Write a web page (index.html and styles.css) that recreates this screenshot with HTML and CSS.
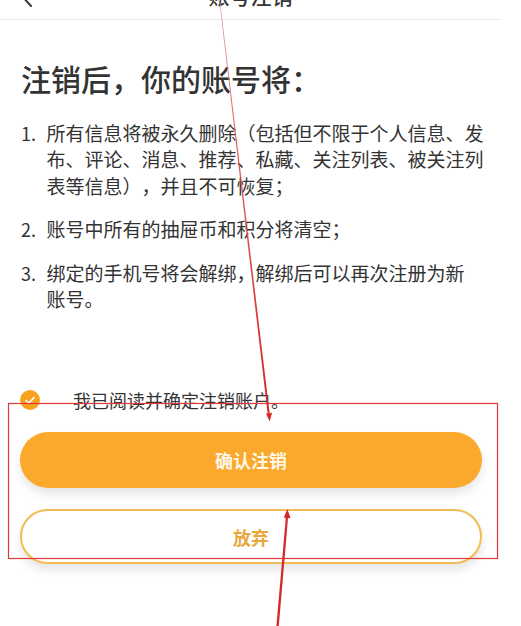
FILE: index.html
```html
<!DOCTYPE html>
<html lang="zh-CN">
<head>
<meta charset="utf-8">
<title>账号注销</title>
<link rel="stylesheet" href="styles.css">
</head>
<body>
<div class="page">
  <header class="topbar">
    <span class="back">
      <svg width="20" height="24" viewBox="0 0 20 24"><polyline points="15,1 5,12 15,23" fill="none" stroke="#3a3a3a" stroke-width="2" stroke-linecap="round" stroke-linejoin="round"/></svg>
    </span>
    <h1 class="topbar-title">账号注销</h1>
  </header>

  <section class="content">
    <h2 class="title">注销后，你的账号将：</h2>
    <ol class="terms">
      <li><span class="num">1.</span><span class="txt">所有信息将被永久删除（包括但不限于个人信息、发布、评论、消息、推荐、私藏、关注列表、被关注列表等信息），并且不可恢复；</span></li>
      <li><span class="num">2.</span><span class="txt">账号中所有的抽屉币和积分将清空；</span></li>
      <li><span class="num">3.</span><span class="txt">绑定的手机号将会解绑，解绑后可以再次注册为新<span class="nowrap">账号。</span></span></li>
    </ol>
  </section>

  <section class="actions">
    <label class="agree">
      <span class="check">
        <svg width="20" height="20" viewBox="0 0 20 20"><circle cx="10" cy="10" r="10" fill="#F7A21C"/><polyline points="6,10.5 8.8,13 14,7.6" fill="none" stroke="#fff" stroke-width="1.6" stroke-linecap="round" stroke-linejoin="round"/></svg>
      </span>
      <span class="agree-text">我已阅读并确定注销账户。</span>
    </label>
    <button class="btn btn-primary" type="button">确认注销</button>
    <button class="btn btn-outline" type="button">放弃</button>
  </section>
</div>

<svg class="annotations" width="521" height="626" viewBox="0 0 521 626">
  <defs>
    <linearGradient id="fade" x1="0" y1="0" x2="0" y2="1">
      <stop offset="0" stop-color="#e8a0a0"/>
      <stop offset="0.35" stop-color="#de5a5a"/>
      <stop offset="1" stop-color="#d42828"/>
    </linearGradient>
  </defs>
  <rect x="8.5" y="403.5" width="489" height="155" fill="none" stroke="#e0383b" stroke-width="1.2"/>
  <polygon points="219.2,0 219.9,0 269.6,413 267.6,413.3" fill="url(#fade)"/>
  <polygon points="269.6,421.5 272,412.8 266,413.5" fill="#d42828"/>
  <polygon points="276.4,626 278.8,626 288.1,517 285.9,516.8" fill="#d42828"/>
  <polygon points="287.3,509 290.6,518.3 283.8,517.7" fill="#d42828"/>
</svg>
</body>
</html>
```

FILE: styles.css
```css
* {
  box-sizing: border-box;
}

html, body {
  margin: 0;
  padding: 0;
  background: #ffffff;
}

body {
  width: 521px;
  height: 626px;
  overflow: hidden;
  position: relative;
  font-family: "Noto Sans CJK SC", "Noto Sans", sans-serif;
  color: #333333;
  text-spacing-trim: space-all;
}

.page {
  width: 501px;
  display: flow-root;
}

.topbar {
  margin-top: -30px;
  height: 50px;
  border-bottom: 1px solid #e6e6e6;
  display: grid;
  grid-template-columns: 60px 1fr 60px;
  align-items: center;
}

.back {
  padding-left: 16px;
  display: flex;
}

.topbar-title {
  grid-column: 2;
  margin: 0;
  text-align: center;
  font-size: 21px;
  font-weight: 500;
  color: #333333;
}

.content {
  padding: 0 10px 0 21px;
}

.title {
  margin: 37.5px 0 0;
  font-size: 30px;
  line-height: 40px;
  font-weight: 500;
  color: #333333;
}

.terms {
  list-style: none;
  margin: 22px 0 0;
  padding: 0;
}

.terms li {
  display: grid;
  grid-template-columns: 25.5px 1fr;
  font-size: 19px;
  line-height: 26.5px;
  color: #333333;
}

.terms li + li {
  margin-top: 17px;
}

.num {
  font-size: 18px;
}

.nowrap {
  white-space: nowrap;
}

.actions {
  padding: 0 19px 0 20px;
  display: flex;
  flex-direction: column;
}

.agree {
  margin-top: 75.5px;
  height: 24px;
  display: flex;
  align-items: center;
  gap: 33px;
}

.check {
  display: flex;
}

.agree-text {
  font-size: 18px;
  color: #333333;
}

.btn {
  width: 100%;
  border-radius: 28px;
  font-family: inherit;
  font-size: 18px;
  font-weight: 700;
  box-shadow: 0 6px 10px rgba(0, 0, 0, 0.1);
  padding: 0;
}

.btn-primary {
  margin-top: 20px;
  height: 56px;
  border: none;
  background: #faa92c;
  color: #fff7e6;
}

.btn-outline {
  margin-top: 21px;
  height: 55px;
  border: 2px solid #f1bd52;
  background: #ffffff;
  color: #eaa83c;
}

.annotations {
  position: absolute;
  top: 0;
  left: 0;
  pointer-events: none;
}
```
